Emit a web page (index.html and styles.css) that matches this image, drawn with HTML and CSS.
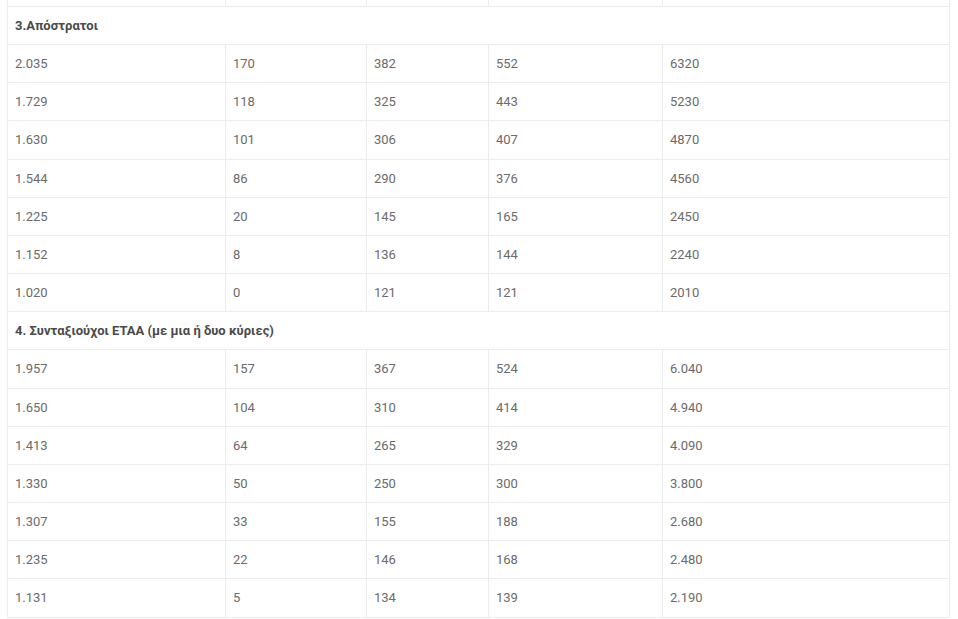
FILE: index.html
```html
<!DOCTYPE html>
<html lang="el">
<head>
<meta charset="utf-8">
<link rel="stylesheet" href="styles.css">
</head>
<body>
<div class="wrap">
<table class="data">
<colgroup>
<col class="c1"><col class="c2"><col class="c3"><col class="c4"><col class="c5">
</colgroup>
<tbody>
<tr class="prev"><td></td><td></td><td></td><td></td><td></td></tr>
<tr class="section"><td colspan="5">3.Απόστρατοι</td></tr>
<tr><td>2.035</td><td>170</td><td>382</td><td>552</td><td>6320</td></tr>
<tr><td>1.729</td><td>118</td><td>325</td><td>443</td><td>5230</td></tr>
<tr><td>1.630</td><td>101</td><td>306</td><td>407</td><td>4870</td></tr>
<tr><td>1.544</td><td>86</td><td>290</td><td>376</td><td>4560</td></tr>
<tr><td>1.225</td><td>20</td><td>145</td><td>165</td><td>2450</td></tr>
<tr><td>1.152</td><td>8</td><td>136</td><td>144</td><td>2240</td></tr>
<tr><td>1.020</td><td>0</td><td>121</td><td>121</td><td>2010</td></tr>
<tr class="section"><td colspan="5">4. Συνταξιούχοι ΕΤΑΑ (με μια ή δυο κύριες)</td></tr>
<tr><td>1.957</td><td>157</td><td>367</td><td>524</td><td>6.040</td></tr>
<tr><td>1.650</td><td>104</td><td>310</td><td>414</td><td>4.940</td></tr>
<tr><td>1.413</td><td>64</td><td>265</td><td>329</td><td>4.090</td></tr>
<tr><td>1.330</td><td>50</td><td>250</td><td>300</td><td>3.800</td></tr>
<tr><td>1.307</td><td>33</td><td>155</td><td>188</td><td>2.680</td></tr>
<tr><td>1.235</td><td>22</td><td>146</td><td>168</td><td>2.480</td></tr>
<tr><td>1.131</td><td>5</td><td>134</td><td>139</td><td>2.190</td></tr>
</tbody>
</table>
</div>
</body>
</html>
```
FILE: styles.css
```css
html, body {
  margin: 0;
  padding: 0;
  background: #fff;
  overflow: hidden;
}
.wrap {
  padding-left: 7px;
}
.data {
  border-collapse: collapse;
  table-layout: fixed;
  width: 942px;
  font-family: Roboto, "Noto Sans", sans-serif;
  font-size: 13px;
  color: #6b6b6b;
}
.c1 { width: 218px; }
.c2 { width: 141px; }
.c3 { width: 122px; }
.c4 { width: 174px; }
.c5 { width: 287px; }
.data td {
  border: 1px solid #ececec;
  padding: 9px 7px 8px 7px;
  line-height: 20.15px;
  text-align: left;
  vertical-align: middle;
}
.data tr.prev td {
  border-top: none;
  padding: 0;
  height: 6px;
  line-height: 6px;
}
.data tr.section td {
  font-weight: 700;
  color: #4a4a4a;
}
```
